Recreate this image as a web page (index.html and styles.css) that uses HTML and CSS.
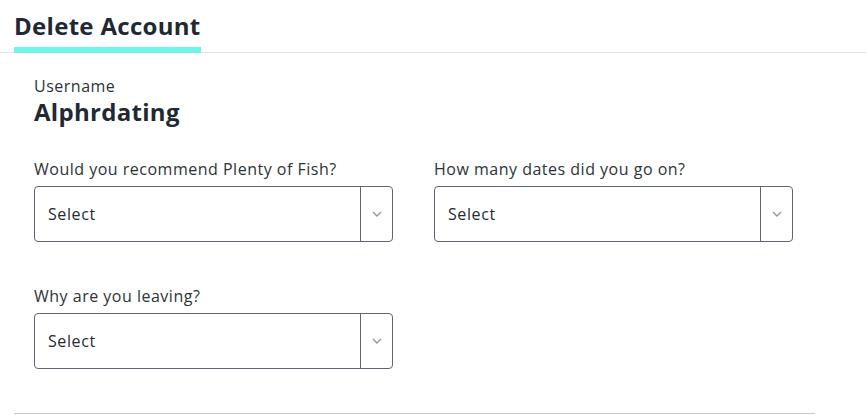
FILE: index.html
```html
<!DOCTYPE html>
<html>
<head>
<meta charset="utf-8">
<link rel="stylesheet" href="styles.css">
</head>
<body>
<div class="page">
  <div class="tabs">
    <div class="tab">Delete Account</div>
  </div>
  <div class="content">
    <div class="field-user">
      <div class="user-label">Username</div>
      <div class="user-name">Alphrdating</div>
    </div>
    <div class="grid">
      <div class="field">
        <label class="q">Would you recommend Plenty of Fish?</label>
        <div class="select">
          <span class="select-text">Select</span>
          <span class="select-arrow"><svg width="10" height="6" viewBox="0 0 10 6"><path d="M1 1 L5 5 L9 1" fill="none" stroke="#8d98a3" stroke-width="1.4"/></svg></span>
        </div>
      </div>
      <div class="field">
        <label class="q">How many dates did you go on?</label>
        <div class="select">
          <span class="select-text">Select</span>
          <span class="select-arrow"><svg width="10" height="6" viewBox="0 0 10 6"><path d="M1 1 L5 5 L9 1" fill="none" stroke="#8d98a3" stroke-width="1.4"/></svg></span>
        </div>
      </div>
      <div class="field">
        <label class="q">Why are you leaving?</label>
        <div class="select">
          <span class="select-text">Select</span>
          <span class="select-arrow"><svg width="10" height="6" viewBox="0 0 10 6"><path d="M1 1 L5 5 L9 1" fill="none" stroke="#8d98a3" stroke-width="1.4"/></svg></span>
        </div>
      </div>
    </div>
  </div>
  <div class="bottom-rule"></div>
</div>
</body>
</html>
```
FILE: styles.css
```css
* { box-sizing: border-box; }
html, body { margin: 0; padding: 0; background: #fff; }
body {
  font-family: "Open Sans", "Liberation Sans", sans-serif;
  color: #1f2933;
  width: 866px;
  height: 415px;
  overflow: hidden;
}
.tabs {
  display: flex;
  padding-left: 14px;
  border-bottom: 1px solid #e1e3ea;
  height: 53px;
}
.tab {
  width: 187px;
  font-size: 24px;
  font-weight: 700;
  letter-spacing: 0.3px;
  line-height: 28px;
  padding-top: 12px;
  border-bottom: 6px solid #6ef5e3;
  margin-bottom: -1px;
  color: #1f2933;
}
.content {
  padding-left: 34px;
  padding-top: 24px;
}
.user-label {
  font-size: 16px;
  letter-spacing: 0.5px;
  line-height: 18px;
  color: #2c3338;
}
.user-name {
  font-size: 24px;
  font-weight: 700;
  letter-spacing: 0.3px;
  line-height: 28px;
  margin-top: 3px;
  color: #1f2933;
}
.grid {
  display: grid;
  grid-template-columns: 359px 359px;
  column-gap: 41px;
  row-gap: 44px;
  margin-top: 33px;
}
.field { display: flex; flex-direction: column; }
.q {
  font-size: 16px;
  letter-spacing: 0.5px;
  line-height: 20px;
  color: #2c3338;
  margin-bottom: 7px;
}
.select {
  display: flex;
  height: 56px;
  border: 1px solid #5e6872;
  border-radius: 4px;
}
.select-text {
  flex: 1;
  display: flex;
  align-items: center;
  padding-left: 13px;
  font-size: 16px;
  letter-spacing: 0.6px;
  color: #1f2933;
}
.select-arrow {
  width: 32px;
  border-left: 1px solid #5e6872;
  display: flex;
  align-items: center;
  justify-content: center;
}
.bottom-rule {
  position: absolute;
  left: 14px;
  top: 413px;
  width: 801px;
  height: 1px;
  background: #c5cdd3;
}
```
